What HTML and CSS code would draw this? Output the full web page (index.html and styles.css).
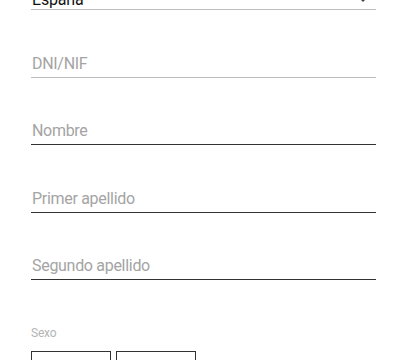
FILE: index.html
```html
<!DOCTYPE html>
<html lang="es">
<head>
<meta charset="utf-8">
<title>Formulario</title>
<link rel="stylesheet" href="styles.css">
</head>
<body>
<form class="form">
  <div class="select">
    <span class="select-value">España</span>
    <svg class="chevron" width="10" height="6" viewBox="0 0 10 6"><path d="M1 1 L5 5 L9 1" fill="none" stroke="#444" stroke-width="1.4"/></svg>
  </div>
  <div class="field"><span class="placeholder">DNI/NIF</span></div>
  <div class="field dark"><span class="placeholder">Nombre</span></div>
  <div class="field dark"><span class="placeholder">Primer apellido</span></div>
  <div class="field dark"><span class="placeholder">Segundo apellido</span></div>
  <div class="group-label">Sexo</div>
  <div class="options">
    <div class="option">Hombre</div>
    <div class="option">Mujer</div>
  </div>
</form>
</body>
</html>
```
FILE: styles.css
```css
html, body {
  margin: 0;
  padding: 0;
  background: #fff;
  overflow: hidden;
}
body {
  font-family: Roboto, "Liberation Sans", sans-serif;
  color: #222;
}
.form {
  margin: -10px 0 0 0;
  padding: 0 19px 0 31px;
}
.select {
  display: flex;
  align-items: flex-end;
  justify-content: space-between;
  font-size: 16px;
  line-height: 19px;
  border-bottom: 1px solid #bdbdbd;
  padding-left: 1px;
  padding-right: 8px;
}
.select-value {
  color: #111;
  letter-spacing: -0.2px;
}
.chevron {
  margin-bottom: 7px;
}
.field {
  margin-top: 43.6px;
  padding: 0 0 4px 1px;
  font-size: 16px;
  line-height: 19px;
  border-bottom: 1px solid #bdbdbd;
}
.field.dark {
  border-bottom-color: #333;
}
.placeholder {
  color: #a4a4a4;
  letter-spacing: -0.3px;
}
.group-label {
  margin-top: 46px;
  font-size: 12px;
  line-height: 14px;
  color: #b4b4b4;
  letter-spacing: -0.2px;
}
.options {
  display: flex;
  gap: 5px;
  margin-top: 11px;
}
.option {
  width: 80px;
  height: 40px;
  border: 1px solid #333;
  padding-top: 8px;
  text-align: center;
  font-size: 14px;
  color: #bbb;
  box-sizing: border-box;
}
```
